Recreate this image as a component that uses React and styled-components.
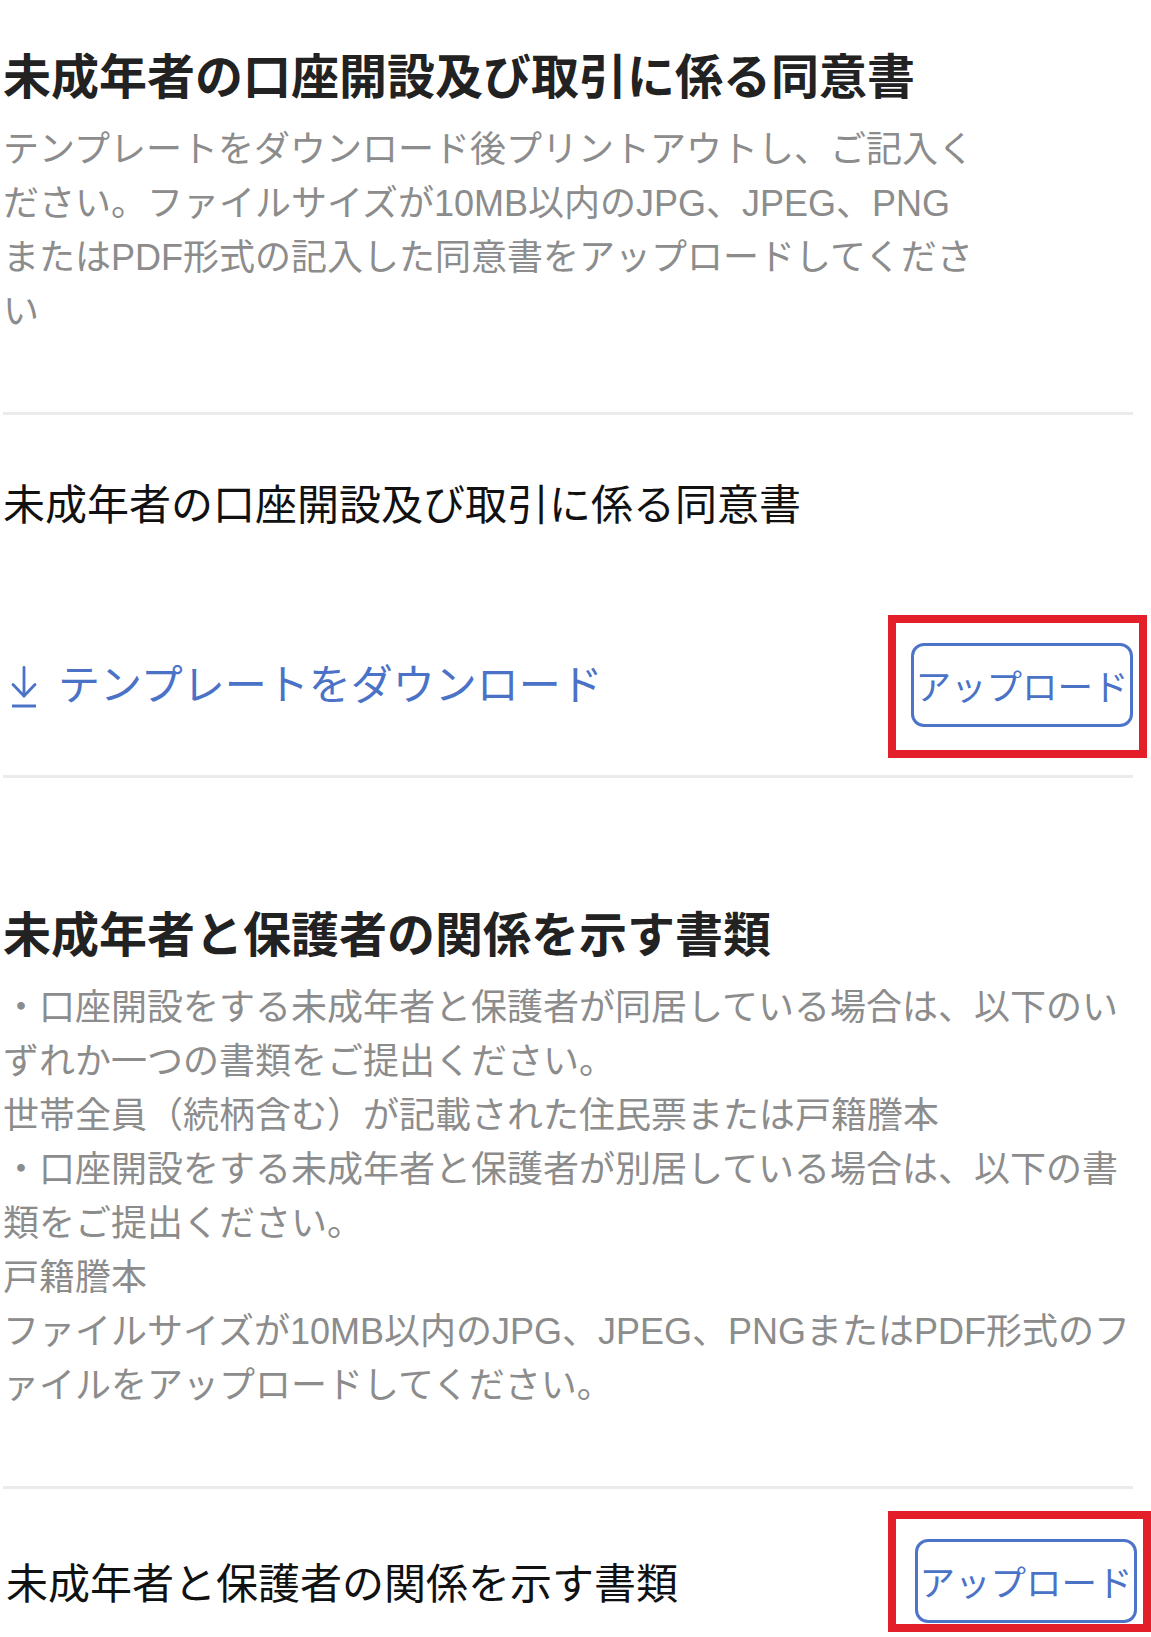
import React from 'react';
import styled, {createGlobalStyle} from 'styled-components';

const GlobalStyle = createGlobalStyle`
  body {
    margin: 0;
    background: #ffffff;
    overflow-x: hidden;
    font-family: "Noto Sans CJK JP", "Noto Sans", sans-serif;
  }
`

const consentNote = [
  "テンプレートをダウンロード後プリントアウトし、ご記入く",
  "ださい。ファイルサイズが10MB以内のJPG、JPEG、PNG",
  "またはPDF形式の記入した同意書をアップロードしてくださ",
  "い",
]

const relationNote = [
  "・口座開設をする未成年者と保護者が同居している場合は、以下のい",
  "ずれか一つの書類をご提出ください。",
  "世帯全員（続柄含む）が記載された住民票または戸籍謄本",
  "・口座開設をする未成年者と保護者が別居している場合は、以下の書",
  "類をご提出ください。",
  "戸籍謄本",
  "ファイルサイズが10MB以内のJPG、JPEG、PNGまたはPDF形式のフ",
  "ァイルをアップロードしてください。",
]

const DownloadIcon = () => (
  <svg width="26" height="42" viewBox="0 0 26 42" fill="none" stroke="#4a72c6" strokeWidth="2.8" strokeLinecap="round" strokeLinejoin="round">
    <path d="M13 1.5 V30" />
    <path d="M2 18.5 L13 30 L24 18.5" />
    <path d="M1 40 H25" strokeLinecap="butt" strokeWidth="3" />
  </svg>
)

const Note = ({lines, width}) => (
  <NoteText $width={width}>
    {lines.map((line, i) => (
      <React.Fragment key={i}>
        {line}
        {i < lines.length - 1 && <br />}
      </React.Fragment>
    ))}
  </NoteText>
)

class App extends React.Component {

  render() {
    return (
      <Page>
        <GlobalStyle />
        <Section $top={43} $bottom={73}>
          <Heading>未成年者の口座開設及び取引に係る同意書</Heading>
          <Note lines={consentNote} width={985} />
        </Section>

        <Section $top={57} $bottom={48}>
          <ItemTitle>未成年者の口座開設及び取引に係る同意書</ItemTitle>
          <ActionRow>
            <DownloadLink href="#">
              <IconBox><DownloadIcon /></IconBox>
              テンプレートをダウンロード
            </DownloadLink>
            <Marked $t={28} $l={23} $r={14} $b={31}>
              <UploadButton type="button">アップロード</UploadButton>
            </Marked>
          </ActionRow>
        </Section>

        <Section $top={123} $bottom={73}>
          <Heading>未成年者と保護者の関係を示す書類</Heading>
          <Note lines={relationNote} />
        </Section>

        <Section $top={50} $bottom={14} $last>
          <UploadRow>
            <ItemTitle $indent={3}>未成年者と保護者の関係を示す書類</ItemTitle>
            <Marked $t={28} $l={27} $r={14} $b={9}>
              <UploadButton type="button">アップロード</UploadButton>
            </Marked>
          </UploadRow>
        </Section>
      </Page>
    )
  }
}

const Page = styled.div`
  width: 1130px;
  padding-left: 3px;
  box-sizing: content-box;
`

const Section = styled.section`
  display: flex;
  flex-direction: column;
  padding-top: ${p => p.$top}px;
  padding-bottom: ${p => p.$bottom}px;
  border-bottom: ${p => p.$last ? 'none' : '3px solid #ebebed'};
`

const Heading = styled.h2`
  margin: 0;
  font-size: 48px;
  line-height: 60px;
  font-weight: 700;
  color: #222222;
  white-space: nowrap;
`

const NoteText = styled.p`
  margin: 20px 0 0;
  max-width: ${p => p.$width ? p.$width + 'px' : 'none'};
  font-family: "Liberation Sans", "Noto Sans CJK JP", sans-serif;
  font-size: 36px;
  line-height: 54px;
  color: #8c8c8c;
  white-space: nowrap;
`

const ItemTitle = styled.div`
  padding-left: ${p => p.$indent || 0}px;
  font-size: 42px;
  line-height: 60px;
  color: #111111;
  white-space: nowrap;
`

const ActionRow = styled.div`
  display: flex;
  align-items: center;
  justify-content: space-between;
  margin-top: 111px;
`

const UploadRow = styled.div`
  display: flex;
  align-items: center;
  justify-content: space-between;
  margin-right: -4px;
`

const DownloadLink = styled.a`
  display: inline-flex;
  align-items: center;
  gap: 21px;
  padding-left: 8px;
  margin-bottom: 6px;
  font-size: 42px;
  line-height: 60px;
  color: #4a72c6;
  text-decoration: none;
`

const IconBox = styled.span`
  display: inline-flex;
  margin-top: 10px;
`

const Marked = styled.div`
  position: relative;
  display: flex;

  &::after {
    content: "";
    position: absolute;
    top: -${p => p.$t}px;
    left: -${p => p.$l}px;
    right: -${p => p.$r}px;
    bottom: -${p => p.$b}px;
    border: 8px solid #e3202a;
    pointer-events: none;
  }
`

const UploadButton = styled.button`
  display: flex;
  align-items: center;
  justify-content: center;
  width: 222px;
  height: 84px;
  padding: 0;
  box-sizing: border-box;
  border: 3px solid #4d74c9;
  border-radius: 13px;
  background: #ffffff;
  font-family: "Noto Sans CJK JP", sans-serif;
  font-size: 35.5px;
  line-height: 1;
  color: #4a72c6;
  white-space: nowrap;
  overflow: hidden;
`

export default App
